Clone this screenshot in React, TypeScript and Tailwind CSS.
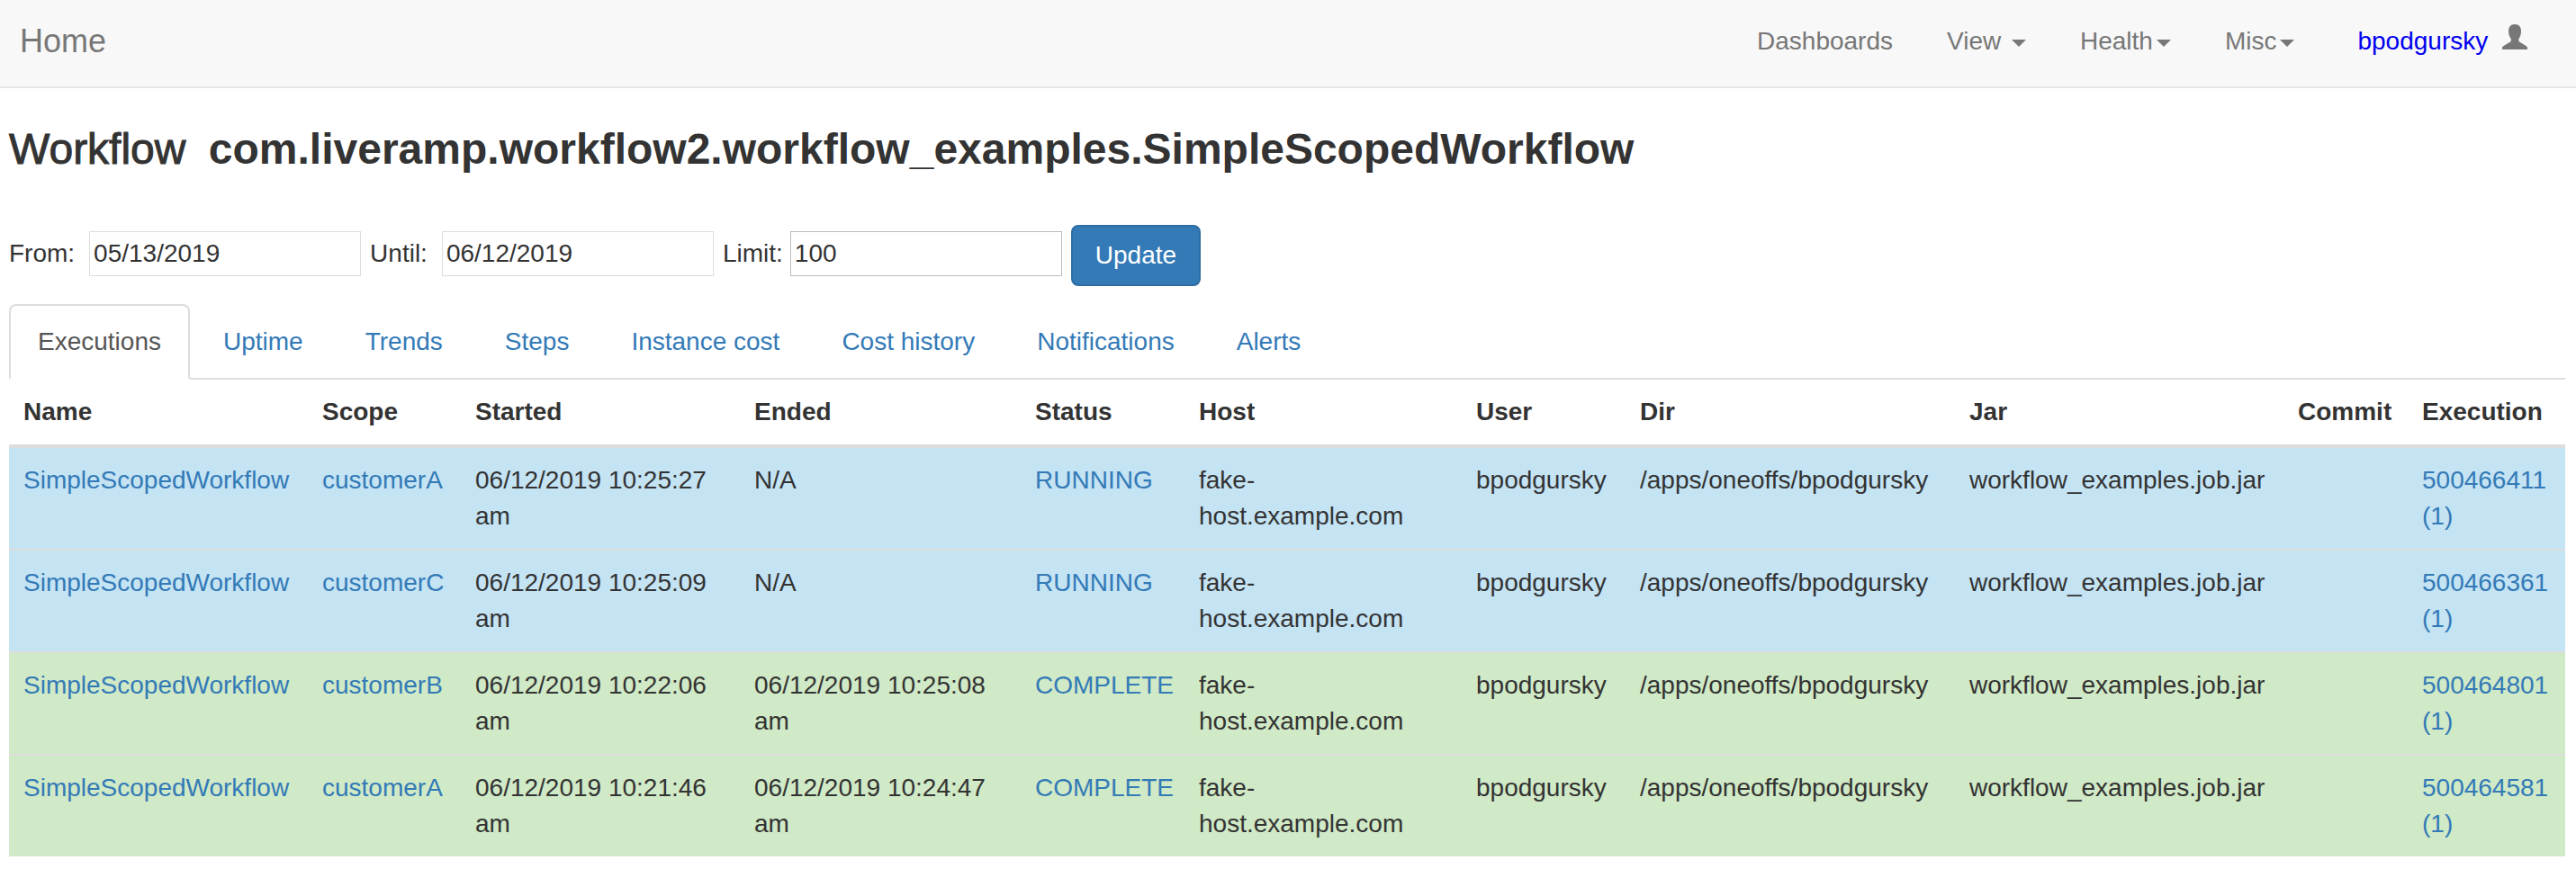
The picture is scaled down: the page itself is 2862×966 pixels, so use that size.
import React from "react";

type Execution = {
  scope: string;
  started: string;
  ended: string;
  status: "RUNNING" | "COMPLETE";
  id: string;
};

const tabs = [
  "Executions",
  "Uptime",
  "Trends",
  "Steps",
  "Instance cost",
  "Cost history",
  "Notifications",
  "Alerts",
];

const columns = [
  { name: "Name", width: "w-[332px]" },
  { name: "Scope", width: "w-[170px]" },
  { name: "Started", width: "w-[310px]" },
  { name: "Ended", width: "w-[312px]" },
  { name: "Status", width: "w-[182px]" },
  { name: "Host", width: "w-[308px]" },
  { name: "User", width: "w-[182px]" },
  { name: "Dir", width: "w-[366px]" },
  { name: "Jar", width: "w-[365px]" },
  { name: "Commit", width: "w-[138px]" },
  { name: "Execution", width: "w-[175px]" },
];

const executions: Execution[] = [
  { scope: "customerA", started: "06/12/2019 10:25:27 am", ended: "N/A", status: "RUNNING", id: "500466411" },
  { scope: "customerC", started: "06/12/2019 10:25:09 am", ended: "N/A", status: "RUNNING", id: "500466361" },
  { scope: "customerB", started: "06/12/2019 10:22:06 am", ended: "06/12/2019 10:25:08 am", status: "COMPLETE", id: "500464801" },
  { scope: "customerA", started: "06/12/2019 10:21:46 am", ended: "06/12/2019 10:24:47 am", status: "COMPLETE", id: "500464581" },
];

function Caret() {
  return (
    <svg className="ml-1 inline-block h-2 w-4 align-middle" viewBox="0 0 16 8" fill="currentColor" aria-hidden="true">
      <path d="M0 0H16L8 8Z" />
    </svg>
  );
}

function UserIcon() {
  return (
    <svg className="ml-2 inline-block h-7 w-7 align-baseline" viewBox="0 0 28 28" fill="currentColor" aria-hidden="true">
      <path d="M14 0C9.6 0 7.1 2.8 7.1 7.2C7.1 11 7.9 14 9.8 16V18.2C9.8 18.8 9.5 19.2 9 19.5L1.2 24.2C.4 24.7 0 25.3 0 26.2V28H28V26.2C28 25.3 27.6 24.7 26.8 24.2L19.2 19.5C18.7 19.2 18.4 18.8 18.4 18.2V16C20.2 14 21 11 21 7.2C21 2.8 18.4 0 14 0Z" />
    </svg>
  );
}

function Navbar() {
  return (
    <nav className="flex items-start justify-between border-b-2 border-[#e7e7e7] bg-[#f8f8f8] pt-[26px] pr-6 pb-[30px] pl-[22px] text-[#777]">
      <a href="#" className="text-4xl leading-10">
        Home
      </a>
      <div className="flex whitespace-nowrap">
        <a href="#" className="px-[30px]">
          Dashboards
        </a>
        <button type="button" className="px-[30px]">
          View <Caret />
        </button>
        <button type="button" className="px-[30px]">
          Health
          <Caret />
        </button>
        <button type="button" className="pr-10 pl-[30px]">
          Misc
          <Caret />
        </button>
        <a href="#" className="px-[30px]">
          <span className="text-[#0000ee]">bpodgursky</span> <UserIcon />
        </a>
      </div>
    </nav>
  );
}

function FilterForm() {
  return (
    <form className="mt-14 flex items-start" onSubmit={(e) => e.preventDefault()}>
      <div className="flex items-center pt-[7px]">
        <label htmlFor="from">From:</label>
        <input
          id="from"
          type="text"
          defaultValue="05/13/2019"
          className="mr-2.5 ml-4 h-[50px] w-[302px] border border-[#ddd] bg-white px-1"
        />
        <label htmlFor="until">Until:</label>
        <input
          id="until"
          type="text"
          defaultValue="06/12/2019"
          className="mr-2.5 ml-4 h-[50px] w-[302px] border border-[#ddd] bg-white px-1"
        />
        <label htmlFor="limit">Limit:</label>
        <input
          id="limit"
          type="text"
          defaultValue="100"
          className="mr-2.5 ml-2 h-[50px] w-[302px] border border-[#bbb] bg-white px-1"
        />
      </div>
      <button
        type="submit"
        className="rounded-lg border-2 border-[#2e6da4] bg-[#337ab7] px-[25px] py-3 text-white"
      >
        Update
      </button>
    </form>
  );
}

function Tabs() {
  return (
    <ul className="mt-5 flex gap-[5px] border-b-2 border-[#ddd]">
      {tabs.map((tab, i) => (
        <li key={tab} className="-mb-0.5">
          <a
            href="#"
            aria-current={i === 0 ? "page" : undefined}
            className={
              i === 0
                ? "block rounded-t-lg border-2 border-[#ddd] border-b-white bg-white px-[30px] py-5 text-[#555]"
                : "block rounded-t-lg border-2 border-transparent px-[30px] py-5 text-[#337ab7]"
            }
          >
            {tab}
          </a>
        </li>
      ))}
    </ul>
  );
}

function ExecutionsTable() {
  return (
    <table className="w-full table-fixed border-collapse text-left">
      <colgroup>
        {columns.map((c) => (
          <col key={c.name} className={c.width} />
        ))}
      </colgroup>
      <thead>
        <tr>
          {columns.map((c) => (
            <th key={c.name} scope="col" className="border-b-4 border-[#ddd] p-4 font-bold">
              {c.name}
            </th>
          ))}
        </tr>
      </thead>
      <tbody className="[&_a]:text-[#337ab7] [&_td]:border-t-2 [&_td]:border-[#ddd] [&_td]:p-4 [&_td]:align-top">
        {executions.map((row) => (
          <tr key={row.id} className={row.status === "RUNNING" ? "bg-[#c4e3f3]" : "bg-[#d0e9c6]"}>
            <td>
              <a href="#">SimpleScopedWorkflow</a>
            </td>
            <td>
              <a href="#">{row.scope}</a>
            </td>
            <td>{row.started}</td>
            <td>{row.ended}</td>
            <td>
              <a href="#">{row.status}</a>
            </td>
            <td>fake-host.example.com</td>
            <td>bpodgursky</td>
            <td className="whitespace-nowrap">/apps/oneoffs/bpodgursky</td>
            <td className="whitespace-nowrap">workflow_examples.job.jar</td>
            <td></td>
            <td>
              <a href="#">{row.id} (1)</a>
            </td>
          </tr>
        ))}
      </tbody>
    </table>
  );
}

export default function App() {
  return (
    <div className="bg-white font-['Liberation_Sans',Arial,sans-serif] text-[28px] leading-10 text-[#333]">
      <Navbar />
      <main className="pt-10 pr-3 pb-3 pl-2.5">
        <h1 className="text-5xl leading-[56px]">
          <span className="mr-3 [-webkit-text-stroke:1px_#333]">Workflow</span>{" "}
          <strong className="font-bold">com.liveramp.workflow2.workflow_examples.SimpleScopedWorkflow</strong>
        </h1>
        <FilterForm />
        <Tabs />
        <ExecutionsTable />
      </main>
    </div>
  );
}
